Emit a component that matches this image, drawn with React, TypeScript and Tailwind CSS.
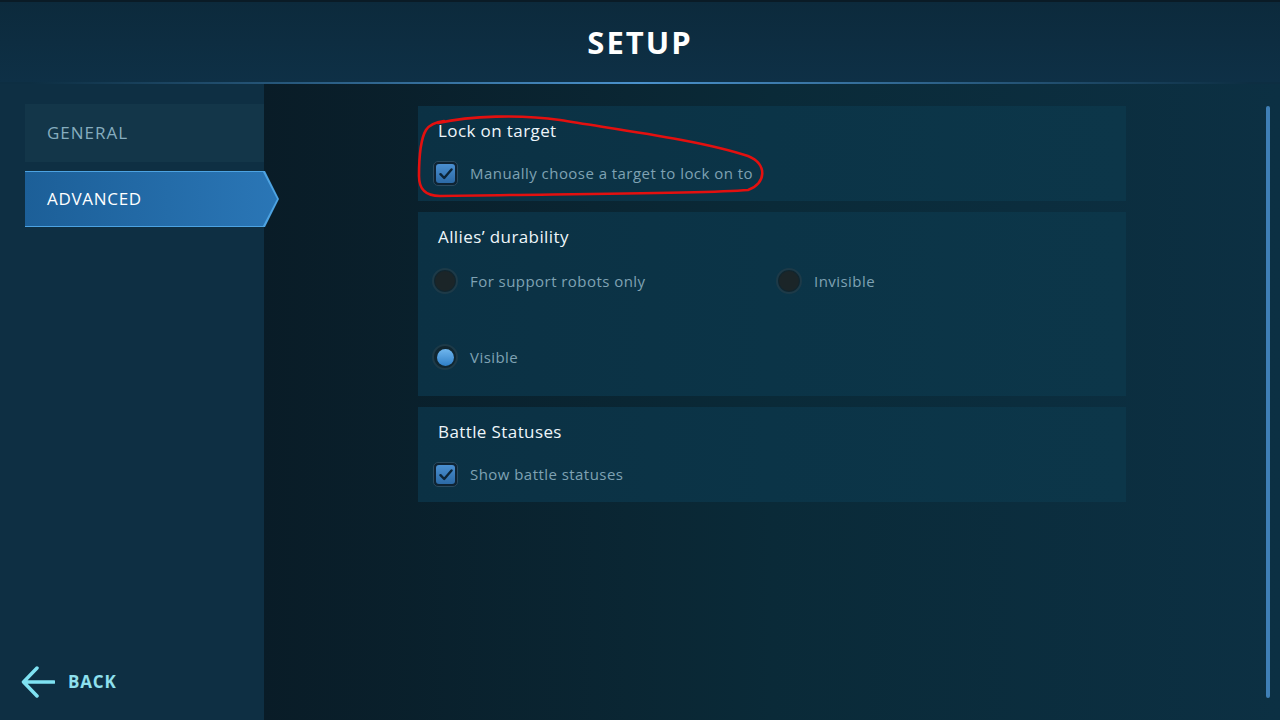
import React from "react";

const font = { fontFamily: '"Open Sans", "Noto Sans", sans-serif' };

function Checkbox() {
  return (
    <div className="h-[25px] w-[25px] rounded-[5px] bg-[#0e2333] border border-[#2a4a5e] p-[2px] shrink-0">
      <div className="h-full w-full rounded-[3px] bg-gradient-to-b from-[#4a8fd0] to-[#2c6aa6] flex items-center justify-center">
        <svg width="14" height="12" viewBox="0 0 14 12" fill="none">
          <path d="M1.5 6.2 L5.2 10 L12.5 1.5" stroke="#0c2436" strokeWidth="2.4" strokeLinecap="round" strokeLinejoin="round" />
        </svg>
      </div>
    </div>
  );
}

function Radio({ on }: { on?: boolean }) {
  return (
    <div className="h-[26px] w-[26px] rounded-full border-2 border-[#1d3a48] bg-[#102630] flex items-center justify-center shrink-0">
      {on ? (
        <div className="h-[17px] w-[17px] rounded-full bg-gradient-to-b from-[#6fb6ee] to-[#2e7fc6]" />
      ) : (
        <div className="h-[20px] w-[20px] rounded-full bg-[#1b2528]" />
      )}
    </div>
  );
}

function Card({ title, children, className = "" }: { title: string; children: React.ReactNode; className?: string }) {
  return (
    <div className={"bg-gradient-to-r from-[#0b3144] via-[#0b3447] to-[#0c3649] px-[20px] pt-[13px] " + className}>
      <h3 className="text-[17px] tracking-[0.4px] text-[#eef6fa] leading-[24px]">{title}</h3>
      {children}
    </div>
  );
}

export default function App() {
  return (
    <div className="relative w-[1280px] h-[720px] overflow-hidden bg-[#0d2e42] flex flex-col" style={font}>
      {/* header */}
      <div className="h-[82px] shrink-0 flex items-center justify-center border-t-2 border-[#0a1b26] bg-gradient-to-b from-[#0c2a3c] to-[#0e3046]">
        <h1 className="text-[31px] font-bold tracking-[2px] text-white pt-[1px]">SETUP</h1>
      </div>
      <div className="h-[2px] shrink-0 mx-[30px] bg-gradient-to-r from-transparent via-[#4b92cc] to-transparent" />

      <div className="flex flex-1 min-h-0">
        {/* sidebar */}
        <aside className="w-[264px] shrink-0 bg-[#0e2f43] flex flex-col pt-[20px] relative z-10">
          <div className="ml-[25px] h-[58px] bg-[#133649] flex items-center pl-[22px] text-[17px] tracking-[1px] text-[#86adbf]">
            GENERAL
          </div>
          <div className="ml-[25px] mt-[9px] w-[254px] h-[56px] bg-[#4da3e2] [clip-path:polygon(0_0,calc(100%-14px)_0,100%_50%,calc(100%-14px)_100%,0_100%)]">
            <div className="h-[54px] w-[252px] mt-[1px] bg-gradient-to-r from-[#1c5f98] to-[#2a76b6] flex items-center pl-[22px] text-[17px] tracking-[0.7px] text-white [clip-path:polygon(0_0,calc(100%-14px)_0,100%_50%,calc(100%-14px)_100%,0_100%)]">
              ADVANCED
            </div>
          </div>
          <div className="mt-auto mb-[22px] ml-[21px] flex items-center gap-[13px]">
            <svg width="34" height="32" viewBox="0 0 34 32" fill="none">
              <path d="M33 16 H3 M16 2 L2.5 16 L16 30" stroke="#7fe2f2" strokeWidth="3.5" strokeLinecap="round" strokeLinejoin="round" />
            </svg>
            <span className="text-[17px] font-bold tracking-[0.8px] text-[#8ee0ee]">BACK</span>
          </div>
        </aside>

        {/* content */}
        <main className="flex-1 bg-gradient-to-r from-[#091c27] via-[#0a2a38] to-[#0c3043] flex pt-[22px]">
          <div className="ml-[154px] w-[708px] flex flex-col gap-[11px]">
            <Card title="Lock on target" className="h-[95px]">
              <div className="mt-[18px] -ml-[5px] flex items-center gap-[12px]">
                <Checkbox />
                <span className="text-[15px] tracking-[0.45px] text-[#7fa2b3]">Manually choose a target to lock on to</span>
              </div>
            </Card>
            <Card title="Allies’ durability" className="h-[184px]">
              <div className="mt-[19px] -ml-[6px] grid grid-cols-[344px_1fr] gap-y-[50px]">
                <div className="flex items-center gap-[12px]">
                  <Radio />
                  <span className="text-[15px] tracking-[0.45px] text-[#7fa2b3]">For support robots only</span>
                </div>
                <div className="flex items-center gap-[12px]">
                  <Radio />
                  <span className="text-[15px] tracking-[0.45px] text-[#7fa2b3]">Invisible</span>
                </div>
                <div className="flex items-center gap-[12px]">
                  <Radio on />
                  <span className="text-[15px] tracking-[0.45px] text-[#7fa2b3]">Visible</span>
                </div>
              </div>
            </Card>
            <Card title="Battle Statuses" className="h-[95px]">
              <div className="mt-[18px] -ml-[5px] flex items-center gap-[12px]">
                <Checkbox />
                <span className="text-[15px] tracking-[0.45px] text-[#7fa2b3]">Show battle statuses</span>
              </div>
            </Card>
          </div>
          <div className="ml-auto mr-[10px] w-[4px] h-[592px] rounded-full bg-[#3f7fb6]" />
        </main>
      </div>

      {/* hand drawn annotation */}
      <svg className="absolute left-0 top-0 pointer-events-none" width="1280" height="720">
        <path
          d="M438 123 C470 116 520 114 560 120 C620 130 700 140 748 156 C768 164 766 184 748 190 C700 194 560 194 440 196 C424 196 419 188 419 176 C419 158 420 140 426 130 C430 124 436 122 444 121"
          fill="none"
          stroke="#e3100f"
          strokeWidth="2.6"
          strokeLinecap="round"
        />
      </svg>
    </div>
  );
}
